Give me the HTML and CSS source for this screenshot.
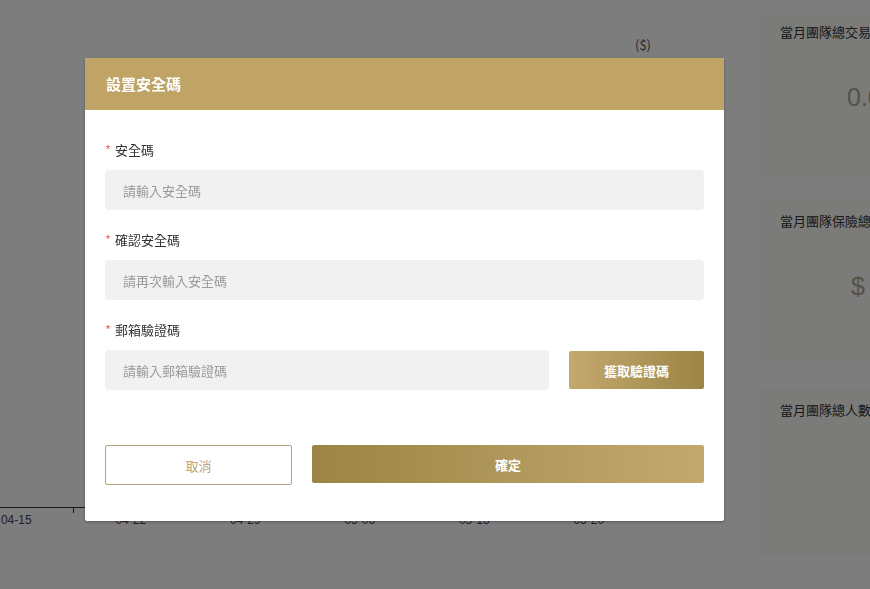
FILE: index.html
```html
<!DOCTYPE html>
<html lang="zh-Hant">
<head>
    <meta charset="UTF-8">
    <meta name="viewport" content="width=device-width, initial-scale=1.0">
    <title>設置安全碼</title>
    <link rel="stylesheet" href="styles.css">
</head>
<body>
    <div class="page">
        <section class="chart">
            <div class="chart-unit">($)</div>
            <div class="chart-body"></div>
            <div class="chart-axis">
                <span class="tick"></span>
                <span class="tick"></span>
                <span class="tick"></span>
                <span class="tick"></span>
                <span class="tick"></span>
                <span class="tick"></span>
            </div>
            <div class="chart-labels">
                <span>04-15</span>
                <span>04-22</span>
                <span>04-29</span>
                <span>05-06</span>
                <span>05-13</span>
                <span>05-20</span>
            </div>
        </section>
        <aside class="stats">
            <div class="stat-card">
                <div class="stat-title">當月團隊總交易額</div>
                <div class="stat-value">0.00</div>
            </div>
            <div class="stat-card">
                <div class="stat-title">當月團隊保險總額</div>
                <div class="stat-value">$ 0</div>
            </div>
            <div class="stat-card">
                <div class="stat-title">當月團隊總人數</div>
                <div class="stat-value"></div>
            </div>
        </aside>
    </div>

    <div class="overlay">
        <div class="dialog">
            <div class="dialog-header">設置安全碼</div>
            <div class="dialog-body">
                <div class="form-item">
                    <label class="form-label"><span class="req">*</span>安全碼</label>
                    <input class="form-input" type="password" placeholder="請輸入安全碼">
                </div>
                <div class="form-item">
                    <label class="form-label"><span class="req">*</span>確認安全碼</label>
                    <input class="form-input" type="password" placeholder="請再次輸入安全碼">
                </div>
                <div class="form-item">
                    <label class="form-label"><span class="req">*</span>郵箱驗證碼</label>
                    <div class="code-row">
                        <input class="form-input" type="text" placeholder="請輸入郵箱驗證碼">
                        <button class="btn-code">獲取驗證碼</button>
                    </div>
                </div>
            </div>
            <div class="dialog-footer">
                <button class="btn-cancel">取消</button>
                <button class="btn-confirm">確定</button>
            </div>
        </div>
    </div>
</body>
</html>
```

FILE: styles.css
```css
body {
    font-family: "Noto Sans CJK TC", "Noto Sans", sans-serif;
    margin: 0;
    padding: 0;
    background-color: #fff;
    width: 870px;
    height: 589px;
    overflow: hidden;
}

.page {
    display: flex;
    height: 589px;
    background-color: #fbfbfb;
}

.chart {
    width: 760px;
    flex-shrink: 0;
    display: flex;
    flex-direction: column;
}

.chart-unit {
    margin: 36px 0 0 635px;
    font-size: 13px;
    color: #555;
    line-height: 18px;
}

.chart-body {
    height: 453px;
}

.chart-axis {
    display: flex;
    width: 620px;
    border-top: 1px solid #333;
    height: 5px;
    padding-left: 73px;
    overflow: hidden;
}

.tick {
    width: 114.5px;
    flex-shrink: 0;
    border-left: 1px solid #333;
    height: 5px;
}

.chart-labels {
    display: flex;
    margin-left: -41px;
    font-family: "Liberation Sans", sans-serif;
    font-size: 12px;
    color: #444;
    line-height: 14px;
}

.chart-labels span {
    width: 114.5px;
    flex-shrink: 0;
    text-align: center;
}

.stats {
    display: flex;
    flex-direction: column;
    gap: 22px;
    padding-top: 10px;
    flex: 1;
}

.stat-card {
    background-color: #f6f6f4;
    height: 167px;
    padding: 12px 0 0 20px;
    box-sizing: border-box;
    white-space: nowrap;
}

.stat-title {
    font-size: 13px;
    color: #333;
    line-height: 20px;
}

.stat-value {
    margin: 40px 0 0 67px;
    font-family: "Liberation Sans", sans-serif;
    font-size: 25px;
    color: #aaa38e;
    line-height: 30px;
}

.stat-card:nth-child(2) .stat-value {
    margin-left: 71px;
}

.overlay {
    position: fixed;
    left: 0;
    top: 0;
    right: 0;
    bottom: 0;
    background-color: rgba(0, 0, 0, 0.5);
    display: flex;
    align-items: flex-start;
    padding: 58px 0 0 85px;
}

.dialog {
    width: 639px;
    background-color: #fff;
    border-radius: 2px;
    overflow: hidden;
    box-shadow: 0 1px 3px rgba(0, 0, 0, 0.3);
}

.dialog-header {
    background-color: #c0a466;
    height: 52px;
    line-height: 52px;
    padding-left: 21px;
    font-size: 15px;
    font-weight: bold;
    color: #fff;
}

.dialog-body {
    padding: 29px 20px 0 20px;
}

.form-item {
    margin-bottom: 19px;
}

.form-label {
    display: block;
    font-size: 13px;
    color: #333;
    line-height: 22px;
    margin-bottom: 9px;
}

.req {
    color: #f56c6c;
    margin-right: 4px;
}

.form-input {
    display: block;
    width: 100%;
    height: 40px;
    box-sizing: border-box;
    border: none;
    border-radius: 4px;
    background-color: #f1f1f1;
    padding: 0 18px;
    font-family: inherit;
    font-size: 13px;
    color: #333;
    outline: none;
}

.form-input::placeholder {
    color: #9a9a9a;
}

.code-row {
    display: flex;
    align-items: center;
    gap: 20px;
}

.code-row .form-input {
    flex: 1;
}

.btn-code {
    width: 135px;
    height: 38px;
    flex-shrink: 0;
    border: none;
    border-radius: 2px;
    background: linear-gradient(to right, #c4a96f, #9b8445);
    color: #fff;
    font-family: inherit;
    font-size: 13px;
    font-weight: bold;
    cursor: pointer;
}

.dialog-footer {
    display: flex;
    gap: 20px;
    padding: 36px 20px 36px 20px;
}

.btn-cancel {
    width: 187px;
    height: 40px;
    flex-shrink: 0;
    border: 1px solid #b4a27a;
    border-radius: 2px;
    background-color: #fff;
    color: #bda675;
    font-family: inherit;
    font-size: 13px;
    cursor: pointer;
}

.btn-confirm {
    flex: 1;
    height: 38px;
    border: none;
    border-radius: 2px;
    background: linear-gradient(to right, #9b8445, #c4a96f);
    color: #fff;
    font-family: inherit;
    font-size: 13px;
    font-weight: bold;
    cursor: pointer;
}
```
